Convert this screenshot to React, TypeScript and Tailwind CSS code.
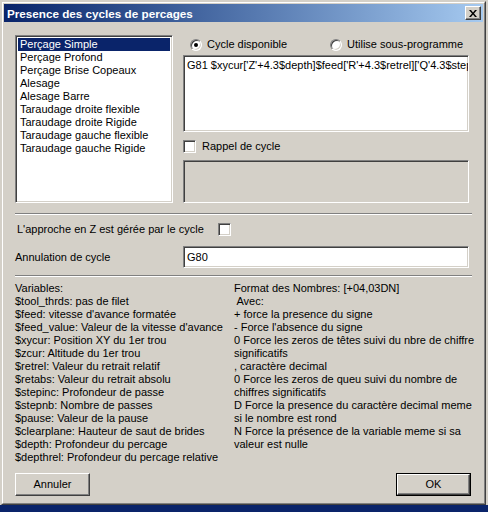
import React from 'react';

const cycles = [
  'Perçage Simple',
  'Perçage Profond',
  'Perçage Brise Copeaux',
  'Alesage',
  'Alesage Barre',
  'Taraudage droite flexible',
  'Taraudage droite Rigide',
  'Taraudage gauche flexible',
  'Taraudage gauche Rigide',
];

const variables = [
  'Variables:',
  '$tool_thrds: pas de filet',
  "$feed: vitesse d'avance formatée",
  "$feed_value: Valeur de la vitesse d'avance",
  '$xycur: Position XY du 1er trou',
  '$zcur: Altitude du 1er trou',
  '$retrel: Valeur du retrait relatif',
  '$retabs: Valeur du retrait absolu',
  '$stepinc: Profondeur de passe',
  '$stepnb: Nombre de passes',
  '$pause: Valeur de la pause',
  '$clearplane: Hauteur de saut de brides',
  '$depth: Profondeur du percage',
  '$depthrel: Profondeur du percage relative',
];

const formatHelp = [
  'Format des Nombres: [+04,03DN]',
  ' Avec:',
  '+ force la presence du signe',
  "- Force l'absence du signe",
  '0 Force les zeros de têtes suivi du nbre de chiffre',
  'significatifs',
  ', caractère decimal',
  '0 Force les zeros de queu suivi du nombre de',
  'chiffres significatifs',
  'D Force la presence du caractère decimal meme',
  'si le nombre est rond',
  'N Force la présence de la variable meme si sa',
  'valeur est nulle',
];

// classic 3d borders
const sunken =
  'border border-t-[#808080] border-l-[#808080] border-r-white border-b-white shadow-[inset_1px_1px_0_#404040,inset_-1px_-1px_0_#d4d0c8]';
const raised =
  'border border-t-white border-l-white border-r-[#404040] border-b-[#404040] shadow-[inset_-1px_-1px_0_#808080,inset_1px_1px_0_#d4d0c8]';

const Radio = ({ checked, label }: { checked?: boolean; label: string }) => (
  <div className="flex items-center h-[13px]">
    <span className="relative w-[12px] h-[12px] rounded-full bg-white border border-t-[#808080] border-l-[#808080] border-r-white border-b-white shadow-[inset_1px_1px_0_#404040,inset_-1px_-1px_0_#d4d0c8] flex items-center justify-center">
      {checked && <span className="w-[4px] h-[4px] rounded-full bg-black" />}
    </span>
    <span className="ml-[5px]">{label}</span>
  </div>
);

const Checkbox = () => <span className={`block w-[13px] h-[13px] bg-white ${sunken}`} />;

const Separator = () => <div className="h-[2px] border-t border-t-[#808080] border-b border-b-white" />;

export default function App() {
  return (
    <div
      className="w-[488px] h-[512px] bg-[#d4d0c8] flex flex-col text-[11px] leading-[13px] text-black overflow-hidden"
      style={{ fontFamily: '"Liberation Sans", Arial, sans-serif' }}
    >
      <div className="flex-1 pl-[1px] pt-[1px]">
        <div className="w-[485px] h-[504px] border border-t-[#d4d0c8] border-l-[#d4d0c8] border-r-[#404040] border-b-[#404040]">
          <div className="h-full border border-t-white border-l-white border-r-[#808080] border-b-[#808080] p-[1px] flex flex-col">
            {/* title bar */}
            <div className="h-[18px] flex items-center justify-between bg-gradient-to-r from-[#0a246a] to-[#a6caf0] pl-[3px] pr-[2px]">
              <span className="text-white font-bold text-[11.7px]">Presence des cycles de percages</span>
              <button className={`w-[16px] h-[14px] bg-[#d4d0c8] ${raised} flex items-center justify-center`}>
                <svg width="8" height="7" viewBox="0 0 8 7">
                  <path d="M0 0h2l2 2.5L6 0h2L5 3.5 8 7H6L4 4.5 2 7H0l3-3.5z" fill="#000" />
                </svg>
              </button>
            </div>

            <div className="flex-1 pl-[11px] pr-[8px] pt-[13px]">
              <div className="flex gap-[10px]">
                {/* cycle list */}
                <div className={`w-[158px] h-[168px] bg-white p-[2px] ${sunken}`}>
                  {cycles.map((c, i) => (
                    <div
                      key={c}
                      className={`h-[13px] pl-[2px] whitespace-nowrap ${i === 0 ? 'bg-[#0a246a] text-white' : ''}`}
                    >
                      {c}
                    </div>
                  ))}
                </div>

                <div className="w-[286px] flex flex-col">
                  <div className="flex h-[20px] items-center pl-[7px] pb-[1px]">
                    <div className="w-[140px]">
                      <Radio checked label="Cycle disponible" />
                    </div>
                    <Radio label="Utilise sous-programme" />
                  </div>
                  <div className={`h-[77px] bg-white px-[3px] py-[3px] overflow-hidden whitespace-nowrap ${sunken}`}>
                    G81 $xycur['Z'+4.3$depth]$feed['R'+4.3$retrel]['Q'4.3$stepinc]
                  </div>
                  <div className="flex items-center h-[13px] mt-[8px]">
                    <Checkbox />
                    <span className="ml-[6px]">Rappel de cycle</span>
                  </div>
                  <div className={`h-[43px] mt-[7px] bg-[#d4d0c8] ${sunken}`} />
                </div>
              </div>

              <div className="mt-[10px] w-[457px]">
                <Separator />
              </div>

              <div className="flex items-center h-[13px] mt-[8px] pl-[2px]">
                <span className="w-[201px]">L'approche en Z est gérée par le cycle</span>
                <Checkbox />
              </div>

              <div className="flex items-center mt-[10px]">
                <span className="w-[168px]">Annulation de cycle</span>
                <div className={`w-[286px] h-[22px] bg-white px-[3px] flex items-center ${sunken}`}>G80</div>
              </div>

              <div className="mt-[7px] w-[457px]">
                <Separator />
              </div>

              <div className="flex mt-[5px]">
                <div className="w-[219px]">
                  {variables.map((v) => (
                    <div key={v} className="whitespace-pre">{v}</div>
                  ))}
                </div>
                <div>
                  {formatHelp.map((v, i) => (
                    <div key={i} className="whitespace-pre">{v}</div>
                  ))}
                </div>
              </div>

              <div className="flex justify-between mt-[9px] w-[456px]">
                <button className={`w-[75px] h-[23px] bg-[#d4d0c8] ${raised}`}>Annuler</button>
                <div className="border border-black">
                  <button className={`w-[73px] h-[21px] block bg-[#d4d0c8] ${raised}`}>OK</button>
                </div>
              </div>
            </div>
          </div>
        </div>
      </div>
      <div className="h-[7px] bg-[#0a246a]" />
    </div>
  );
}
